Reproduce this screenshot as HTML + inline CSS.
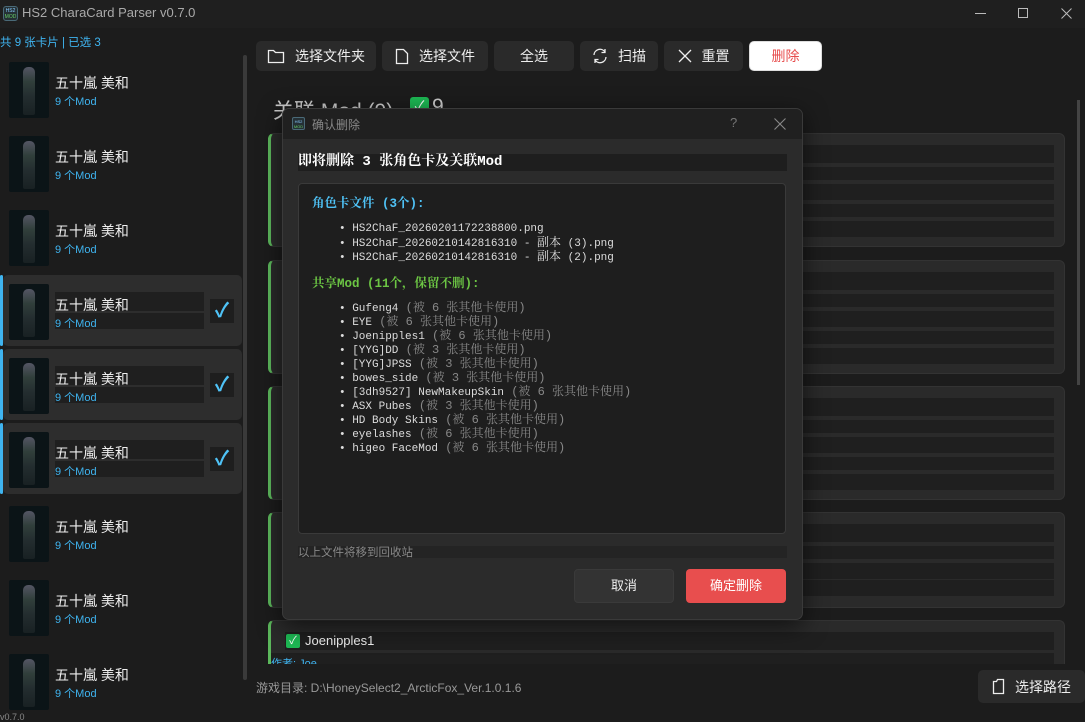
<!DOCTYPE html>
<html><head><meta charset="utf-8"><style>
*{margin:0;padding:0;box-sizing:border-box}
body{width:1085px;height:722px;background:#1c1c1c;font-family:"Liberation Sans","Noto Sans CJK SC",sans-serif;color:#e8e8e8;position:relative;overflow:hidden}
.a{position:absolute}
.title{left:0;top:0;width:1085px;height:28px;background:#1f1f1f}
.item{left:3px;width:239px;height:71px;border-radius:5px}
.sel{background:#2d2d2d}
.bar{left:0;width:3px;height:71px;background:#3fb4f0;border-radius:2px}
.thumb{width:40px;height:56px;background:#0b1417;border-radius:2px}
.fig{left:14px;top:5px;width:12px;height:48px;background:linear-gradient(#667 0,#3a4a44 30%,#2a3436 60%,#1c2426 100%);border-radius:5px 5px 2px 2px;opacity:.8}
.nm{font-size:14px;color:#eee}
.md{font-size:11px;color:#3fb4f0}
.chk{width:24px;height:24px;background:#1e1e1e;color:#4fc3f7;font-size:20px;text-align:center;line-height:24px;font-weight:bold}
.btn{top:41px;height:30px;background:#2a2a2a;border-radius:5px;font-size:14px;color:#eee;display:flex;align-items:center;justify-content:center;gap:10px}
.card{left:268px;width:797px;background:#2a2a2a;border:1px solid #333;border-left:3px solid #5cb85c;border-radius:6px}
.st{left:20px;right:10px;background:#1f1f1f}
.mono{font-family:"Liberation Mono","Noto Serif CJK SC",monospace;font-size:11px;color:#ddd}
.mono div{height:14px;line-height:14px;white-space:nowrap;overflow:visible}
.mono .c{font-size:12px;line-height:14px}
.g{color:#888;font-size:12px;line-height:14px}
</style></head><body>
<div class="a title"></div>
<div class="a" style="left:3px;top:6px;width:15px;height:15px;border:1px solid #4a6a78;border-radius:3px;background:#253035;font-size:5px;line-height:6px;text-align:center;color:#8cf;padding-top:1px">HS2<br><span style="color:#6c6">MOD</span></div>
<div class="a" style="left:22px;top:5px;font-size:13px;color:#aaa">HS2 CharaCard Parser v0.7.0</div>
<div class="a" style="left:975px;top:13px;width:11px;height:1px;background:#bbb"></div>
<div class="a" style="left:1018px;top:8px;width:10px;height:10px;border:1px solid #bbb"></div>
<svg class="a" style="left:1061px;top:8px" width="11" height="11" viewBox="0 0 11 11"><path d="M0.5 0.5l10 10M10.5 0.5l-10 10" stroke="#bbb" stroke-width="1"/></svg>
<div class="a" style="left:0;top:34px;font-size:11.5px;color:#3fb4f0">共 9 张卡片 | 已选 3</div>
<div class="a" style="left:243px;top:55px;width:4px;height:625px;background:#3a3a3a;border-radius:2px"></div>

<div class="a item" style="top:58px"></div>
<div class="a item sel" style="top:275px"></div><div class="a bar" style="top:275px"></div>
<div class="a item sel" style="top:349px"></div><div class="a bar" style="top:349px"></div>
<div class="a item sel" style="top:423px"></div><div class="a bar" style="top:423px"></div>

<div class="a thumb" style="left:9px;top:62px"><div class="a fig"></div></div><div class="a nm" style="left:55px;top:73px">五十嵐 美和</div><div class="a md" style="left:55px;top:93px">9 个Mod</div>
<div class="a thumb" style="left:9px;top:136px"><div class="a fig"></div></div><div class="a nm" style="left:55px;top:147px">五十嵐 美和</div><div class="a md" style="left:55px;top:167px">9 个Mod</div>
<div class="a thumb" style="left:9px;top:210px"><div class="a fig"></div></div><div class="a nm" style="left:55px;top:221px">五十嵐 美和</div><div class="a md" style="left:55px;top:241px">9 个Mod</div>
<div class="a" style="left:55px;top:292px;width:149px;height:19px;background:#1f1f1f"></div><div class="a" style="left:55px;top:313px;width:149px;height:16px;background:#1f1f1f"></div>
<div class="a thumb" style="left:9px;top:284px"><div class="a fig"></div></div><div class="a nm" style="left:55px;top:295px">五十嵐 美和</div><div class="a md" style="left:55px;top:315px">9 个Mod</div><div class="a chk" style="left:210px;top:299px">✓</div>
<div class="a" style="left:55px;top:366px;width:149px;height:19px;background:#1f1f1f"></div><div class="a" style="left:55px;top:387px;width:149px;height:16px;background:#1f1f1f"></div>
<div class="a thumb" style="left:9px;top:358px"><div class="a fig"></div></div><div class="a nm" style="left:55px;top:369px">五十嵐 美和</div><div class="a md" style="left:55px;top:389px">9 个Mod</div><div class="a chk" style="left:210px;top:373px">✓</div>
<div class="a" style="left:55px;top:440px;width:149px;height:19px;background:#1f1f1f"></div><div class="a" style="left:55px;top:461px;width:149px;height:16px;background:#1f1f1f"></div>
<div class="a thumb" style="left:9px;top:432px"><div class="a fig"></div></div><div class="a nm" style="left:55px;top:443px">五十嵐 美和</div><div class="a md" style="left:55px;top:463px">9 个Mod</div><div class="a chk" style="left:210px;top:447px">✓</div>
<div class="a thumb" style="left:9px;top:506px"><div class="a fig"></div></div><div class="a nm" style="left:55px;top:517px">五十嵐 美和</div><div class="a md" style="left:55px;top:537px">9 个Mod</div>
<div class="a thumb" style="left:9px;top:580px"><div class="a fig"></div></div><div class="a nm" style="left:55px;top:591px">五十嵐 美和</div><div class="a md" style="left:55px;top:611px">9 个Mod</div>
<div class="a thumb" style="left:9px;top:654px"><div class="a fig"></div></div><div class="a nm" style="left:55px;top:665px">五十嵐 美和</div><div class="a md" style="left:55px;top:685px">9 个Mod</div>
<div class="a" style="left:0;top:712px;font-size:9px;color:#888">v0.7.0</div>

<div class="a btn" style="left:256px;width:120px"><svg width="18" height="16" viewBox="0 0 18 16"><path d="M1.5 2.5h5l2 2h8v10h-15z" fill="none" stroke="#eee" stroke-width="1.3"/></svg>选择文件夹</div>
<div class="a btn" style="left:382px;width:106px"><svg width="14" height="17" viewBox="0 0 14 17"><path d="M1.5 1.5h7l4 4v10h-11z" fill="none" stroke="#eee" stroke-width="1.3"/></svg>选择文件</div>
<div class="a btn" style="left:494px;width:80px">全选</div>
<div class="a btn" style="left:580px;width:78px"><svg width="16" height="16" viewBox="0 0 16 16"><path d="M2 7a6 6 0 0 1 11-3M14 9a6 6 0 0 1-11 3M13 1v3.5h-3.5M3 15v-3.5h3.5" fill="none" stroke="#eee" stroke-width="1.3"/></svg>扫描</div>
<div class="a btn" style="left:664px;width:79px"><svg width="14" height="14" viewBox="0 0 14 14"><path d="M1 1l12 12M13 1L1 13" stroke="#eee" stroke-width="1.3"/></svg>重置</div>
<div class="a btn" style="left:749px;width:73px;background:#fff;color:#e74c4c;border:1px solid #ddd">删除</div>

<div class="a" style="left:273px;top:95px;font-size:21px;color:#ccc">关联 Mod (9)</div>
<div class="a" style="left:410px;top:97px;width:19px;height:19px;background:#1db954;border-radius:3px;color:#fff;font-size:14px;text-align:center;line-height:19px">✓</div>
<div class="a" style="left:432px;top:95px;font-size:21px;color:#ccc">9</div>
<div class="a" style="left:1077px;top:100px;width:3px;height:285px;background:#444"></div>

<div class="a card" style="top:133px;height:114px"><div class="a st" style="top:11px;height:18px"></div><div class="a st" style="top:33px;height:13px"></div><div class="a st" style="top:50px;height:16px"></div><div class="a st" style="top:70px;height:13px"></div><div class="a st" style="top:87px;height:16px"></div></div>
<div class="a card" style="top:260px;height:114px"><div class="a st" style="top:11px;height:18px"></div><div class="a st" style="top:33px;height:13px"></div><div class="a st" style="top:50px;height:16px"></div><div class="a st" style="top:70px;height:13px"></div><div class="a st" style="top:87px;height:16px"></div></div>
<div class="a card" style="top:386px;height:114px"><div class="a st" style="top:11px;height:18px"></div><div class="a st" style="top:33px;height:13px"></div><div class="a st" style="top:50px;height:16px"></div><div class="a st" style="top:70px;height:13px"></div><div class="a st" style="top:87px;height:16px"></div></div>
<div class="a card" style="top:512px;height:96px"><div class="a st" style="top:11px;height:18px"></div><div class="a st" style="top:33px;height:13px"></div><div class="a st" style="top:50px;height:16px"></div><div class="a st" style="top:67px;height:16px"></div></div>
<div class="a card" style="top:620px;height:60px;border-bottom:none;border-radius:6px 6px 0 0"><div class="a st" style="top:11px;height:18px;left:14px"></div><div class="a st" style="top:32px;height:20px;left:0"></div></div>
<div class="a" style="left:286px;top:634px;width:14px;height:14px;background:#1db954;border-radius:2px;color:#fff;font-size:11px;text-align:center;line-height:14px">✓</div>
<div class="a" style="left:305px;top:633px;font-size:13px;color:#eee">Joenipples1</div>
<div class="a" style="left:256px;top:664px;width:830px;height:58px;background:#1c1c1c"></div>
<div class="a" style="left:271px;top:655px;font-size:11px;color:#3fb4f0;height:9px;overflow:hidden">作者: Joe</div>
<div class="a" style="left:256px;top:679px;font-size:12px;color:#999">游戏目录: D:\HoneySelect2_ArcticFox_Ver.1.0.1.6</div>
<div class="a btn" style="left:978px;top:670px;width:107px;height:33px"><svg width="13" height="17" viewBox="0 0 13 17"><path d="M1.5 3.5h3l1-2h6v14h-10z" fill="none" stroke="#eee" stroke-width="1.3"/></svg>选择路径</div>

<div class="a" style="left:282px;top:108px;width:521px;height:512px;background:#2b2b2b;border:1px solid #3a3a3a;border-radius:7px;box-shadow:0 6px 24px rgba(0,0,0,.6);overflow:hidden">
 <div class="a" style="left:0;top:0;width:521px;height:30px;background:#202020"></div>
 <div class="a" style="left:9px;top:8px;width:13px;height:13px;border:1px solid #4a6a78;border-radius:2px;background:#253035;font-size:4px;line-height:5px;text-align:center;color:#8cf;padding-top:1px">HS2<br><span style="color:#6c6">MOD</span></div>
 <div class="a" style="left:29px;top:7px;font-size:12px;color:#888">确认删除</div>
 <div class="a" style="left:447px;top:6px;font-size:13px;color:#777">?</div>
 <svg class="a" style="left:491px;top:9px" width="12" height="12" viewBox="0 0 12 12"><path d="M0.5 0.5l11 11M11.5 0.5l-11 11" stroke="#888" stroke-width="1.1"/></svg>
 <div class="a" style="left:15px;top:45px;width:489px;height:17px;background:#1e1e1e"></div>
 <div class="a" style="left:15px;top:45px;font-family:'Liberation Mono','Noto Serif CJK SC',monospace;font-size:14px;line-height:17px;font-weight:bold;color:#fff">即将删除 3 张角色卡及关联Mod</div>
 <div class="a" style="left:15px;top:74px;width:488px;height:351px;background:#1e1e1e;border:1px solid #3a3a3a;border-radius:4px">
  <div class="a" style="left:13px;top:9px;font-family:'Liberation Mono','Noto Serif CJK SC',monospace;color:#4fc3f7;font-weight:bold;font-size:12.5px">角色卡文件 (3个):</div>
  <div class="a mono" style="left:40px;top:38px"><div>• HS2ChaF_20260201172238800.png</div><div>• HS2ChaF_20260210142816310 - <span class="c">副本</span> (3).png</div><div>• HS2ChaF_20260210142816310 - <span class="c">副本</span> (2).png</div></div>
  <div class="a" style="left:13px;top:89px;font-family:'Liberation Mono','Noto Serif CJK SC',monospace;color:#6cc644;font-weight:bold;font-size:12.5px">共享Mod (11个，保留不删):</div>
  <div class="a mono" style="left:40px;top:117px"><div>• Gufeng4<span class="g"> (被 6 张其他卡使用)</span></div><div>• EYE<span class="g"> (被 6 张其他卡使用)</span></div><div>• Joenipples1<span class="g"> (被 6 张其他卡使用)</span></div><div>• [YYG]DD<span class="g"> (被 3 张其他卡使用)</span></div><div>• [YYG]JPSS<span class="g"> (被 3 张其他卡使用)</span></div><div>• bowes_side<span class="g"> (被 3 张其他卡使用)</span></div><div>• [3dh9527] NewMakeupSkin<span class="g"> (被 6 张其他卡使用)</span></div><div>• ASX Pubes<span class="g"> (被 3 张其他卡使用)</span></div><div>• HD Body Skins<span class="g"> (被 6 张其他卡使用)</span></div><div>• eyelashes<span class="g"> (被 6 张其他卡使用)</span></div><div>• higeo FaceMod<span class="g"> (被 6 张其他卡使用)</span></div></div>
 </div>
 <div class="a" style="left:15px;top:437px;width:489px;height:12px;background:#242424"></div>
 <div class="a" style="left:15px;top:435px;font-size:11.5px;color:#888">以上文件将移到回收站</div>
 <div class="a" style="left:291px;top:460px;width:100px;height:34px;background:#333;border:1px solid #3a3a3a;border-radius:4px;font-size:13px;color:#eee;text-align:center;line-height:32px">取消</div>
 <div class="a" style="left:403px;top:460px;width:100px;height:34px;background:#e84e4e;border-radius:4px;font-size:13px;color:#fff;text-align:center;line-height:34px">确定删除</div>
</div>
</body></html>
